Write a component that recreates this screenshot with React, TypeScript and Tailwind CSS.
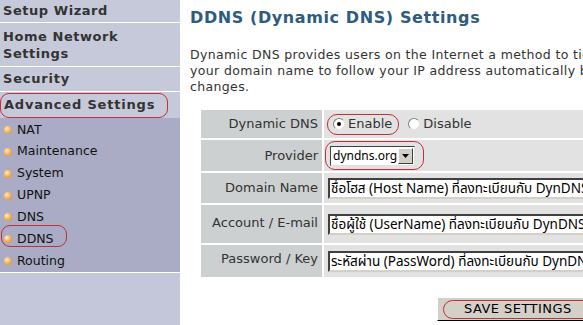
import React from "react";

const font = { fontFamily: '"DejaVu Sans", Verdana, sans-serif' };
const thai = { fontFamily: 'Tahoma, "Noto Sans", "Noto Sans Thai", "DejaVu Sans", sans-serif' };

function Bullet() {
  return (
    <span
      className="inline-block w-[8px] h-[8px] rounded-full mr-[5px] shrink-0"
      style={{ background: "radial-gradient(circle at 35% 35%, #fff2d8 0%, #f7b45a 45%, #d9822b 100%)" }}
    />
  );
}

function Radio({ checked }: { checked?: boolean }) {
  return (
    <span className="relative inline-block w-[12px] h-[12px] rounded-full bg-white border border-t-[#808080] border-l-[#808080] border-r-[#e0e0e0] border-b-[#e0e0e0] mr-[3px] shrink-0">
      {checked && <span className="absolute left-[3px] top-[3px] w-[4px] h-[4px] rounded-full bg-black" />}
    </span>
  );
}

function TextBox({ text }: { text: string }) {
  return (
    <div
      className="h-[21px] w-[300px] shrink-0 bg-white border-2 border-t-[#404040] border-l-[#404040] border-r-[#d4d0c8] border-b-[#d4d0c8] flex items-center pl-[1px] text-[13.5px] text-black whitespace-nowrap overflow-hidden"
      style={thai}
    >
      {text}
    </div>
  );
}

export default function App() {
  const items = ["NAT", "Maintenance", "System", "UPNP", "DNS", "DDNS", "Routing"];
  return (
    <div className="w-[583px] h-[325px] overflow-hidden flex bg-white" style={font}>
      {/* Sidebar */}
      <div className="w-[180px] shrink-0 flex flex-col bg-[#c4c6d9] whitespace-nowrap">
        <div className="h-[22px] bg-[#c6c9d9] pl-[3px] flex items-center text-[13px] font-bold text-[#333] tracking-[0.55px]">
          Setup Wizard
        </div>
        <div className="h-[1px] bg-white" />
        <div className="h-[43px] bg-[#c6c9d9] pl-[3px] flex flex-col justify-center text-[13px] font-bold text-[#333] leading-[17px] tracking-[0.55px]">
          <span>Home Network</span>
          <span>Settings</span>
        </div>
        <div className="h-[1px] bg-white" />
        <div className="h-[24px] bg-[#c6c9d9] pl-[3px] flex items-center text-[13px] font-bold text-[#333] tracking-[0.8px]">
          Security
        </div>
        <div className="h-[1px] bg-white" />
        <div className="h-[26px] bg-[#c6c9d9] flex items-center">
          <div className="h-[25px] w-[168px] rounded-[9px] border border-[#c0303a] flex items-center pl-[3px] text-[13px] font-bold text-[#333] tracking-[0.8px]">
            Advanced Settings
          </div>
        </div>
        <div className="h-[154px] bg-[#a9acc4] flex flex-col pt-[1px]">
          {items.map((it) => (
            <div key={it} className="h-[22px] flex items-center pl-[4px] text-[12.5px] text-[#111]">
              {it === "DDNS" ? (
                <div className="relative flex items-center">
                  <span className="absolute left-[-3px] top-[-5px] w-[66px] h-[22px] rounded-[9px] border border-[#c0303a]" />
                  <Bullet />
                  {it}
                </div>
              ) : (
                <>
                  <Bullet />
                  {it}
                </>
              )}
            </div>
          ))}
        </div>
        <div className="h-[1px] bg-white" />
        <div className="flex-1 bg-[#c4c6d9]" />
      </div>

      {/* Main */}
      <div className="flex-1 pl-[10px] pt-[8px] min-w-0">
        <h1 className="text-[16px] font-bold text-[#2d5c7e] tracking-[0.6px] h-[20px] leading-[20px] whitespace-nowrap">
          DDNS (Dynamic DNS) Settings
        </h1>
        <p className="mt-[19px] text-[12.5px] leading-[16px] text-[#333] whitespace-nowrap tracking-[0.36px]">
          Dynamic DNS provides users on the Internet a method to tie
          <br />
          your domain name to follow your IP address automatically by
          <br />
          changes.
        </p>
        <div className="mt-[15px] ml-[11px] w-[480px] flex flex-col gap-[2px] text-[13px] text-[#333]">
          {/* Row 1 */}
          <div className="flex gap-[2px] h-[28px]">
            <div className="w-[121px] shrink-0 bg-[#ccd0d0] flex items-center justify-end pr-[4px]">Dynamic DNS</div>
            <div className="flex-1 bg-[#e2e2e2] flex items-center pl-[3px]">
              <div className="flex items-center h-[21px] rounded-[10px] border border-[#c0303a] pl-[5px] pr-[6px]">
                <Radio checked />
                <span>Enable</span>
              </div>
              <div className="flex items-center ml-[9px]">
                <Radio />
                <span>Disable</span>
              </div>
            </div>
          </div>
          {/* Row 2 */}
          <div className="flex gap-[2px] h-[31px]">
            <div className="w-[121px] shrink-0 bg-[#ccd0d0] flex items-center justify-end pr-[4px]">Provider</div>
            <div className="flex-1 bg-[#e2e2e2] flex items-center pl-[1px]">
              <div className="h-[29px] w-[99px] rounded-[10px] border border-[#c0303a] flex items-center pl-[4px]">
                <div className="h-[20px] w-[85px] bg-white border border-t-[#404040] border-l-[#404040] border-r-[#e0e0e0] border-b-[#e0e0e0] flex items-center">
                  <span className="flex-1 pl-[2px] text-[12px] text-black whitespace-nowrap overflow-hidden" style={thai}>dyndns.org</span>
                  <span className="w-[15px] h-[16px] mr-[1px] shrink-0 bg-[#d4d0c8] border border-t-white border-l-white border-r-[#404040] border-b-[#404040] flex items-center justify-center">
                    <svg width="7" height="4" viewBox="0 0 7 4"><path d="M0 0h7L3.5 4z" fill="#000" /></svg>
                  </span>
                </div>
              </div>
            </div>
          </div>
          {/* Row 3 */}
          <div className="flex gap-[2px] h-[30px]">
            <div className="w-[121px] shrink-0 bg-[#ccd0d0] flex items-center justify-end pr-[4px]">Domain Name</div>
            <div className="flex-1 bg-[#e2e2e2] flex items-center pl-[4px]">
              <TextBox text="ชื่อโฮส (Host Name) ที่ลงทะเบียนกับ DynDNS" />
            </div>
          </div>
          {/* Row 4 */}
          <div className="flex gap-[2px] h-[38px]">
            <div className="w-[121px] shrink-0 bg-[#ccd0d0] flex items-center justify-end pr-[4px] pb-[2px]">Account / E-mail</div>
            <div className="flex-1 bg-[#e2e2e2] flex items-center pl-[4px]">
              <TextBox text="ชื่อผู้ใช้ (UserName) ที่ลงทะเบียนกับ DynDNS" />
            </div>
          </div>
          {/* Row 5 */}
          <div className="flex gap-[2px] h-[32px]">
            <div className="w-[121px] shrink-0 bg-[#ccd0d0] flex items-start pt-[4px] justify-end pr-[4px]">Password / Key</div>
            <div className="flex-1 bg-[#e2e2e2] flex items-center pl-[4px]">
              <TextBox text="ระหัสผ่าน (PassWord) ที่ลงทะเบียนกับ DynDNS" />
            </div>
          </div>
        </div>
        <div className="mt-[20px] ml-[247px] w-[160px] h-[24px] bg-[#d4d0c8] border border-t-white border-l-white border-r-black border-b-black flex items-center pl-[5px]">
          <div className="h-[19px] w-[150px] rounded-[10px] border border-[#c0303a] flex items-center pl-[20px] text-[13px] text-black tracking-[0.45px] whitespace-nowrap">
            SAVE SETTINGS
          </div>
        </div>
      </div>
    </div>
  );
}
